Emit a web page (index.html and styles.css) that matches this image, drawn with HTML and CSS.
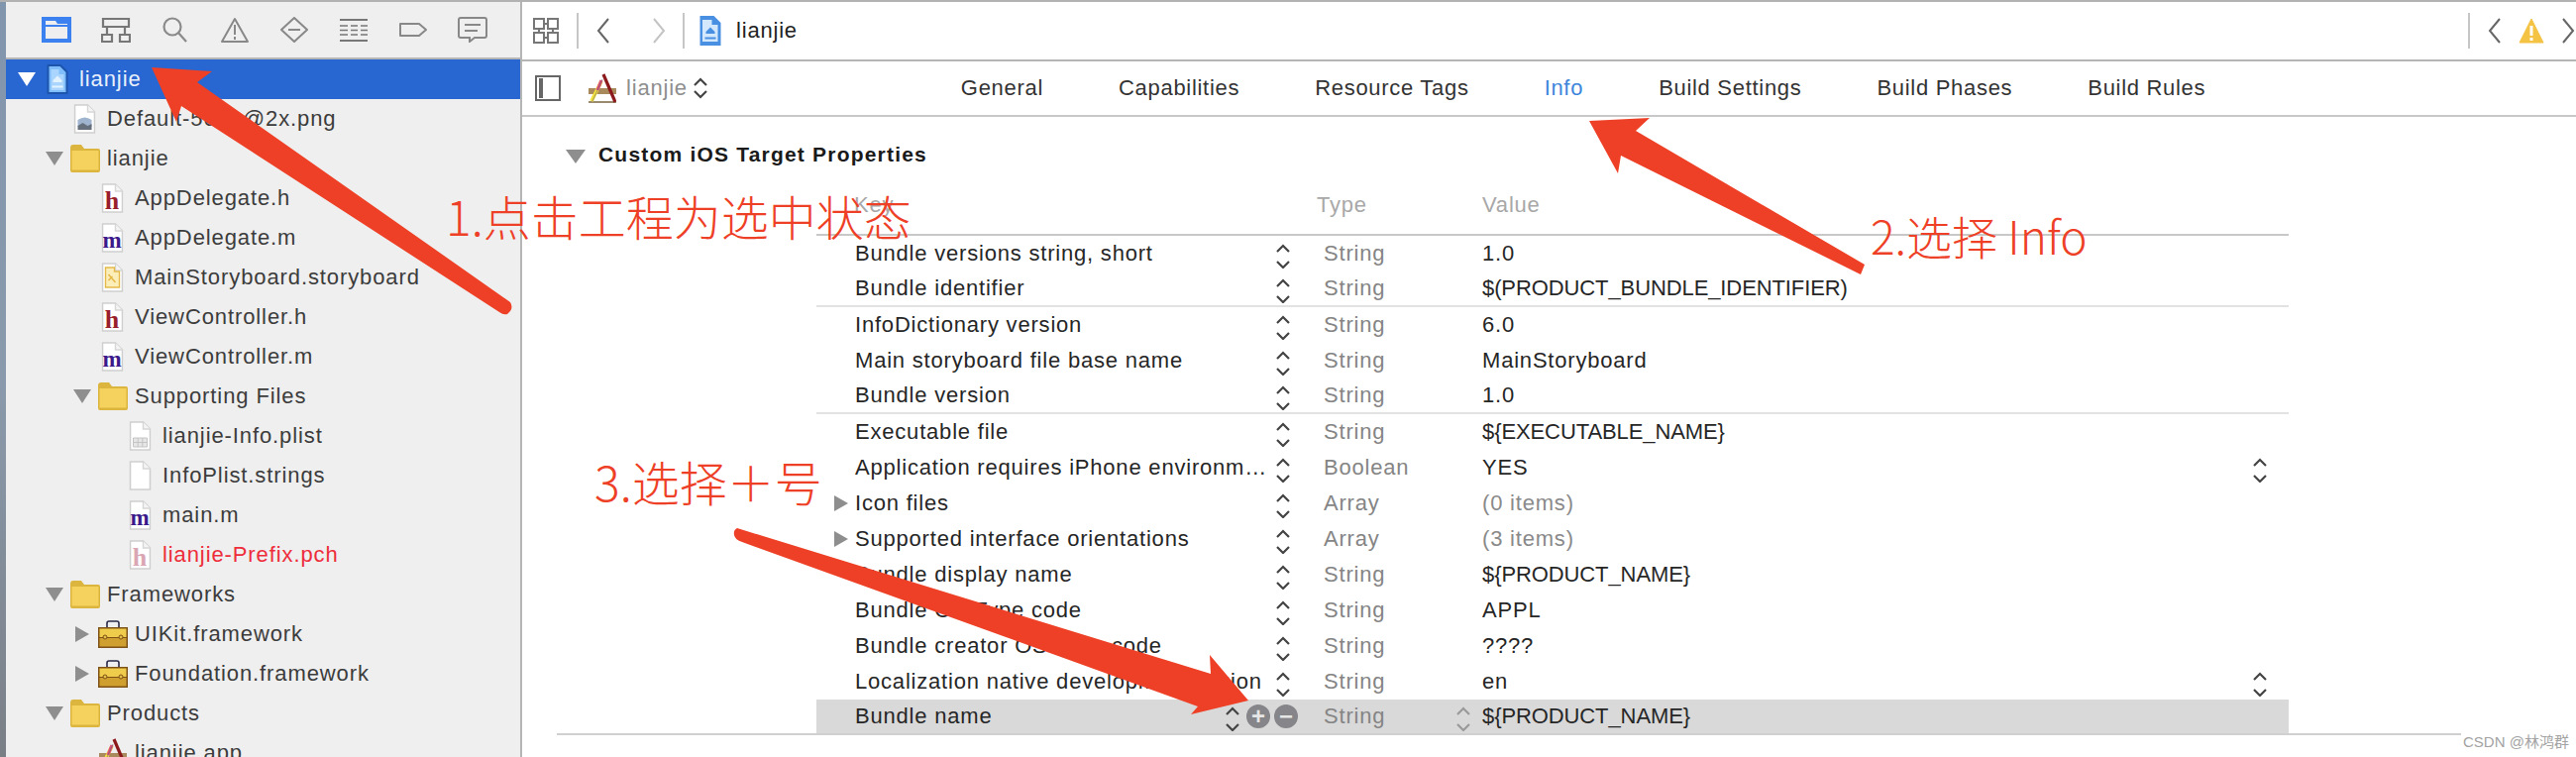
FILE: index.html
```html
<!DOCTYPE html>
<html lang="zh">
<head>
<meta charset="utf-8">
<title>lianjie</title>
<link rel="stylesheet" href="styles.css">
</head>
<body>
<svg class="defs" width="0" height="0" aria-hidden="true">
  <defs>
    <symbol id="file" viewBox="0 0 22 30"><path d="M1 1H14L21 8V29H1Z" fill="#fff" stroke="#cfcfcf" stroke-width="1.6"/><path d="M14 1V8H21" fill="#f4f4f4" stroke="#d6d6d6" stroke-width="1.4"/></symbol>
    <symbol id="file-h" viewBox="0 0 22 30"><use href="#file"/><text x="11" y="26" text-anchor="middle" class="glyph-h">h</text></symbol>
    <symbol id="file-h-faded" viewBox="0 0 22 30"><use href="#file"/><text x="11" y="26" text-anchor="middle" class="glyph-h-faded">h</text></symbol>
    <symbol id="file-m" viewBox="0 0 22 30"><use href="#file"/><text x="11" y="25" text-anchor="middle" class="glyph-m">m</text></symbol>
    <symbol id="file-png" viewBox="0 0 22 30"><use href="#file"/><path d="M4 16Q11 11 18 16V23H4Z" fill="#9fb4cf"/><path d="M4 22L9 19L14 22L18 20V26H4Z" fill="#66707c"/></symbol>
    <symbol id="file-board" viewBox="0 0 22 30"><use href="#file"/><path d="M4 5H13V9H18V25H4Z" fill="#fbeeb9" stroke="#e5b94a" stroke-width="1.4"/><path d="M7 12L14 20M7 18L11 14" stroke="#e5b94a" stroke-width="1.6"/></symbol>
    <symbol id="file-plist" viewBox="0 0 22 30"><use href="#file"/><path d="M4 17H18V26H4ZM4 21.500H18M8.700 17V26M13.300 17V26" fill="#e6e6e6" stroke="#c4c4c4" stroke-width="1"/></symbol>
    <symbol id="proj-sel" viewBox="0 0 23 32"><path d="M1 1H15L22 8V31H1Z" fill="#1d55ac"/><path d="M3 3H14L20 9V29H3Z" fill="#7fbdfb"/><path d="M5 6H13V11H18V27H5Z" fill="#a9d5ff"/><path d="M7 17L11.500 12.500L16 17V19H7Z" fill="#e3f2ff"/><path d="M6 23.500H17" stroke="#e3f2ff" stroke-width="2"/></symbol>
    <symbol id="proj" viewBox="0 0 23 32"><path d="M1 1H15L22 8V31H1Z" fill="#4a90e2"/><path d="M3.500 5H13V10H19V27H3.500Z" fill="#d4e8fd"/><path d="M7 17L11.500 12.500L16 17V19H7Z" fill="#4a90e2"/><path d="M6 23.500H17" stroke="#4a90e2" stroke-width="2"/></symbol>
    <symbol id="folder" viewBox="0 0 30 28"><path d="M0 3Q0 0 3 0H11L14 4H28Q30 4 30 6V26Q30 28 28 28H2Q0 28 0 26Z" fill="#dcb53e"/><path d="M1.500 6H28.500V25.500H1.500Z" fill="#f5d25e"/></symbol>
    <symbol id="toolbox" viewBox="0 0 30 28"><path d="M9 8V3Q9 1 11 1H19Q21 1 21 3V8" fill="none" stroke="#2a2a4a" stroke-width="1.600"/><path d="M0 7H30V28H0Z" fill="#7e5216"/><path d="M1.500 8.500H28.500V17H1.500Z" fill="#f0cc4c"/><path d="M1.500 18H28.500V26.500H1.500Z" fill="#cf9f30"/><circle cx="7" cy="17" r="2" fill="#e3c04a" stroke="#7e5216"/><circle cx="23" cy="17" r="2" fill="#e3c04a" stroke="#7e5216"/></symbol>
    <symbol id="appicon" viewBox="0 0 28 30"><path d="M0 15H28V21H0Z" fill="#a98a5c"/><path d="M0 29H28" stroke="#9a8a70" stroke-width="2"/><path d="M15 1L27 29" stroke="#8c1a1c" stroke-width="3.200"/><path d="M13 8L3 28" stroke="#f4e23c" stroke-width="3.600"/><path d="M9 17L13 7" stroke="#e0507a" stroke-width="3.200"/><path d="M4 28L14 6" stroke="#666" stroke-width=".6"/></symbol>
    <symbol id="updown" viewBox="0 0 16 30"><path d="M2 13L8 7L14 13M2 23L8 29L14 23" fill="none" stroke="currentColor" stroke-width="2.200"/></symbol>
    <symbol id="updown-sm" viewBox="0 0 16 24"><path d="M2 9L8 3L14 9M2 15L8 21L14 15" fill="none" stroke="currentColor" stroke-width="2.200"/></symbol>
  </defs>
</svg>

<div class="app">
  <div class="edge"></div>

  <aside class="sidebar">
    <nav class="nav-tools">
      <svg class="tool" viewBox="0 0 30 26"><path d="M0 0H30V26H0Z" fill="#3b82f0"/><path d="M4 4H14L16 7H26V22H4Z" fill="#efefef"/><path d="M4 8H26V10H4Z" fill="#3b82f0"/></svg>
      <svg class="tool" viewBox="0 0 30 26"><g fill="none" stroke="#777" stroke-width="2.200"><path d="M2 2H28V10H2ZM1 18H11V25H1ZM19 18H29V25H19ZM6 10V18M24 10V18"/></g></svg>
      <svg class="tool" viewBox="0 0 30 26"><g fill="none" stroke="#8a8a8a" stroke-width="2.200"><circle cx="12" cy="10" r="8.500"/><path d="M18 16L26 25"/></g></svg>
      <svg class="tool" viewBox="0 0 30 26"><g fill="none" stroke="#888" stroke-width="2"><path d="M15 2L28 25H2Z" stroke-linejoin="round"/><path d="M15 8V18M15 20V23"/></g></svg>
      <svg class="tool" viewBox="0 0 30 26"><g fill="none" stroke="#888" stroke-width="2"><path d="M15 1L28 13L15 25L2 13Z" stroke-linejoin="round"/><path d="M9 13H21"/></g></svg>
      <svg class="tool" viewBox="0 0 30 26"><g fill="none" stroke="#777" stroke-width="2"><path d="M1 3H29M1 24H29"/><path d="M1 9H9M12 9H19M22 9H29M1 13.500H9M12 13.500H19M22 13.500H29M1 18H9M12 18H19M22 18H29" stroke-width="1.600"/></g></svg>
      <svg class="tool" viewBox="0 0 30 26"><path d="M2 7H21L28 13L21 19H2Z" fill="none" stroke="#888" stroke-width="2" stroke-linejoin="round"/></svg>
      <svg class="tool" viewBox="0 0 30 26"><g fill="none" stroke="#888" stroke-width="2"><path d="M3 1H27Q29 1 29 3V19Q29 21 27 21H17L12 25V21H3Q1 21 1 19V3Q1 1 3 1Z"/><path d="M7 8H23M7 14H20" stroke-width="1.800"/></g></svg>
    </nav>

    <ul class="tree">
      <li class="node lv0 selected"><span class="slot"><i class="tri-down white"></i></span><span class="ico"><svg class="i-proj"><use href="#proj-sel"/></svg></span><span>lianjie</span></li>
      <li class="node lv1"><span class="slot"></span><span class="ico"><svg class="i-file"><use href="#file-png"/></svg></span><span>Default-568h@2x.png</span></li>
      <li class="node lv1"><span class="slot"><i class="tri-down"></i></span><span class="ico"><svg class="i-folder"><use href="#folder"/></svg></span><span>lianjie</span></li>
      <li class="node lv2"><span class="slot"></span><span class="ico"><svg class="i-file"><use href="#file-h"/></svg></span><span>AppDelegate.h</span></li>
      <li class="node lv2"><span class="slot"></span><span class="ico"><svg class="i-file"><use href="#file-m"/></svg></span><span>AppDelegate.m</span></li>
      <li class="node lv2"><span class="slot"></span><span class="ico"><svg class="i-file"><use href="#file-board"/></svg></span><span>MainStoryboard.storyboard</span></li>
      <li class="node lv2"><span class="slot"></span><span class="ico"><svg class="i-file"><use href="#file-h"/></svg></span><span>ViewController.h</span></li>
      <li class="node lv2"><span class="slot"></span><span class="ico"><svg class="i-file"><use href="#file-m"/></svg></span><span>ViewController.m</span></li>
      <li class="node lv2"><span class="slot"><i class="tri-down"></i></span><span class="ico"><svg class="i-folder"><use href="#folder"/></svg></span><span>Supporting Files</span></li>
      <li class="node lv3"><span class="slot"></span><span class="ico"><svg class="i-file"><use href="#file-plist"/></svg></span><span>lianjie-Info.plist</span></li>
      <li class="node lv3"><span class="slot"></span><span class="ico"><svg class="i-file"><use href="#file"/></svg></span><span>InfoPlist.strings</span></li>
      <li class="node lv3"><span class="slot"></span><span class="ico"><svg class="i-file"><use href="#file-m"/></svg></span><span>main.m</span></li>
      <li class="node lv3 missing"><span class="slot"></span><span class="ico"><svg class="i-file"><use href="#file-h-faded"/></svg></span><span>lianjie-Prefix.pch</span></li>
      <li class="node lv1"><span class="slot"><i class="tri-down"></i></span><span class="ico"><svg class="i-folder"><use href="#folder"/></svg></span><span>Frameworks</span></li>
      <li class="node lv2"><span class="slot"><i class="tri-right"></i></span><span class="ico"><svg class="i-folder"><use href="#toolbox"/></svg></span><span>UIKit.framework</span></li>
      <li class="node lv2"><span class="slot"><i class="tri-right"></i></span><span class="ico"><svg class="i-folder"><use href="#toolbox"/></svg></span><span>Foundation.framework</span></li>
      <li class="node lv1"><span class="slot"><i class="tri-down"></i></span><span class="ico"><svg class="i-folder"><use href="#folder"/></svg></span><span>Products</span></li>
      <li class="node lv2"><span class="slot"></span><span class="ico"><svg class="i-app"><use href="#appicon"/></svg></span><span>lianjie.app</span></li>
    </ul>
  </aside>

  <main class="main">
    <header class="jumpbar">
      <svg class="jb-grid" viewBox="0 0 26 26"><g fill="none" stroke="#777" stroke-width="2"><path d="M1 1H11V11H1ZM15 1H25V11H15ZM1 15H11V25H1ZM15 15H25V25H15ZM11 6H15M20 11V15M6 11V15M11 20H15"/></g></svg>
      <span class="divider first"></span>
      <svg class="jb-chev back" viewBox="0 0 14 26"><path d="M12 1L2 13L12 25" fill="none" stroke="#666" stroke-width="2"/></svg>
      <svg class="jb-chev forward" viewBox="0 0 14 26"><path d="M2 1L12 13L2 25" fill="none" stroke="#c4c4c4" stroke-width="2"/></svg>
      <span class="divider second"></span>
      <svg class="i-proj"><use href="#proj"/></svg>
      <span class="jb-title">lianjie</span>
      <span class="jb-right">
        <span class="divider"></span>
        <svg class="jb-chev r-back" viewBox="0 0 14 26"><path d="M12 1L2 13L12 25" fill="none" stroke="#666" stroke-width="2"/></svg>
        <svg class="jb-warn" viewBox="0 0 26 26"><path d="M13 1L25 25H1Z" fill="#f5c344" stroke="#f5c344" stroke-linejoin="round"/><path d="M13 8V18M13 20V23" stroke="#fff" stroke-width="3"/></svg>
        <svg class="jb-chev r-forward" viewBox="0 0 14 26"><path d="M2 1L12 13L2 25" fill="none" stroke="#666" stroke-width="2"/></svg>
      </span>
    </header>

    <div class="subbar">
      <svg class="panel" viewBox="0 0 26 26"><path d="M1 1H25V25H1Z" fill="#fff" stroke="#666" stroke-width="2"/><path d="M4 3H8V23H4Z" fill="#666"/></svg>
      <svg class="i-app"><use href="#appicon"/></svg>
      <span class="target">lianjie</span>
      <svg class="updown small"><use href="#updown-sm"/></svg>
      <nav class="tabs">
        <span>General</span>
        <span>Capabilities</span>
        <span>Resource Tags</span>
        <span class="active">Info</span>
        <span>Build Settings</span>
        <span>Build Phases</span>
        <span>Build Rules</span>
      </nav>
    </div>

    <section class="content">
      <h2 class="section-title"><i class="tri-down large"></i>Custom iOS Target Properties</h2>
      <div class="props">
        <div class="row head"><span class="key">Key</span><span class="chev"></span><span class="type">Type</span><span class="value">Value</span></div>
        <div class="row"><span class="key">Bundle versions string, short</span><span class="chev"><svg class="updown"><use href="#updown"/></svg></span><span class="type">String</span><span class="value">1.0</span></div>
        <div class="row end"><span class="key">Bundle identifier</span><span class="chev"><svg class="updown"><use href="#updown"/></svg></span><span class="type">String</span><span class="value caps">$(PRODUCT_BUNDLE_IDENTIFIER)</span></div>
        <div class="row"><span class="key">InfoDictionary version</span><span class="chev"><svg class="updown"><use href="#updown"/></svg></span><span class="type">String</span><span class="value">6.0</span></div>
        <div class="row"><span class="key">Main storyboard file base name</span><span class="chev"><svg class="updown"><use href="#updown"/></svg></span><span class="type">String</span><span class="value">MainStoryboard</span></div>
        <div class="row end"><span class="key">Bundle version</span><span class="chev"><svg class="updown"><use href="#updown"/></svg></span><span class="type">String</span><span class="value">1.0</span></div>
        <div class="row"><span class="key">Executable file</span><span class="chev"><svg class="updown"><use href="#updown"/></svg></span><span class="type">String</span><span class="value caps">${EXECUTABLE_NAME}</span></div>
        <div class="row"><span class="key">Application requires iPhone environm…</span><span class="chev"><svg class="updown"><use href="#updown"/></svg></span><span class="type">Boolean</span><span class="value">YES<svg class="updown right"><use href="#updown"/></svg></span></div>
        <div class="row"><span class="key expand"><i class="tri-right"></i>Icon files</span><span class="chev"><svg class="updown"><use href="#updown"/></svg></span><span class="type">Array</span><span class="value muted">(0 items)</span></div>
        <div class="row"><span class="key expand"><i class="tri-right"></i>Supported interface orientations</span><span class="chev"><svg class="updown"><use href="#updown"/></svg></span><span class="type">Array</span><span class="value muted">(3 items)</span></div>
        <div class="row"><span class="key">Bundle display name</span><span class="chev"><svg class="updown"><use href="#updown"/></svg></span><span class="type">String</span><span class="value caps">${PRODUCT_NAME}</span></div>
        <div class="row"><span class="key">Bundle OS Type code</span><span class="chev"><svg class="updown"><use href="#updown"/></svg></span><span class="type">String</span><span class="value">APPL</span></div>
        <div class="row"><span class="key">Bundle creator OS Type code</span><span class="chev"><svg class="updown"><use href="#updown"/></svg></span><span class="type">String</span><span class="value">????</span></div>
        <div class="row"><span class="key">Localization native development region</span><span class="chev"><svg class="updown"><use href="#updown"/></svg></span><span class="type">String</span><span class="value">en<svg class="updown right"><use href="#updown"/></svg></span></div>
        <div class="row picked">
          <span class="key">Bundle name<span class="row-tools"><svg class="updown"><use href="#updown"/></svg><span class="round">+</span></span></span>
          <span class="chev"><span class="round">&#8722;</span></span>
          <span class="type">String<svg class="updown light"><use href="#updown"/></svg></span>
          <span class="value caps">${PRODUCT_NAME}</span>
        </div>
      </div>
    </section>
  </main>
</div>

<svg class="arrows" viewBox="0 0 2600 764" aria-hidden="true">
  <path d="M153 68L214 72L199 83L515 305Q518 310 515 314L512 317Q508 318 504 315L183 107L178 123Z"/>
  <path d="M1604 122L1665 119L1651 132L1882 267L1878 277L1636 157L1633 175Z"/>
  <path d="M744 533Q740 535 741 540Q742 545 749 547L1209 713L1202 721L1260 707L1221 661L1222 680Z"/>
</svg>
<div class="note n1">1.点击工程为选中状态</div>
<div class="note n2">2.选择 Info</div>
<div class="note n3">3.选择＋号</div>
<div class="mark">CSDN @林鸿群</div>
</body>
</html>
```
FILE: styles.css
```css
* { box-sizing: border-box; }
html, body { margin: 0; padding: 0; }
body {
  position: relative;
  width: 2600px;
  height: 764px;
  overflow: hidden;
  background: #fff;
  border-top: 2px solid #b2b2b2;
  font-family: "Liberation Sans", "Noto Sans CJK SC", sans-serif;
  font-size: 22px;
  color: #3c3c3c;
}
.defs { position: absolute; }
.app { display: flex; height: 762px; }
.edge { width: 6px; flex: none; background: linear-gradient(#8195ad, #8a9aac 50%, #7a7f86); }

/* Sidebar */
.sidebar { width: 521px; flex: none; background: #efefef; border-right: 2px solid #b5b5b5; overflow: hidden; }
.nav-tools { height: 58px; display: flex; align-items: center; gap: 30px; padding-left: 36px; border-bottom: 2px solid #b5b5b5; }
.tool { width: 30px; height: 26px; flex: none; }
.tree { list-style: none; margin: 0; padding: 0; }
.node { height: 40px; display: flex; align-items: center; letter-spacing: .9px; white-space: nowrap; }
.lv0 { padding-left: 7px; }
.lv1 { padding-left: 35px; }
.lv2 { padding-left: 63px; }
.lv3 { padding-left: 91px; }
.slot { width: 28px; flex: none; display: flex; justify-content: center; }
.ico { width: 39px; flex: none; padding-right: 6px; display: flex; justify-content: center; align-items: center; }
.selected { background: #2866d1; color: #e8f0fb; }
.missing { color: #ee2d3a; }
.i-file { width: 23px; height: 30px; flex: none; }
.i-proj { width: 24px; height: 32px; flex: none; }
.i-folder { width: 32px; height: 28px; flex: none; }
.i-app { width: 28px; height: 30px; flex: none; }
.glyph-h { font: bold 26px "Liberation Serif", serif; fill: #9a1f2d; }
.glyph-h-faded { font: bold 26px "Liberation Serif", serif; fill: #dba6b4; }
.glyph-m { font: bold 23px "Liberation Serif", serif; fill: #3c1a8a; }

/* Triangles */
.tri-down { display: block; width: 0; height: 0; border-left: 9px solid transparent; border-right: 9px solid transparent; border-top: 14px solid #8e8e8e; }
.tri-down.white { border-top-color: #fff; }
.tri-down.large { border-left-width: 10px; border-right-width: 10px; border-top-width: 14px; }
.tri-right { display: block; width: 0; height: 0; border-top: 8px solid transparent; border-bottom: 8px solid transparent; border-left: 14px solid #8e8e8e; }

/* Main */
.main { flex: 1; min-width: 0; }
.jumpbar { height: 58px; display: flex; align-items: center; padding-left: 11px; color: #222; }
.jb-grid { width: 26px; height: 26px; flex: none; }
.divider { width: 2px; height: 36px; background: #c6c6c6; flex: none; display: block; }
.divider.first { margin-left: 18px; }
.divider.second { margin-left: 17px; margin-right: 14px; }
.jb-chev { width: 14px; height: 26px; flex: none; }
.jb-chev.back { margin-left: 18px; }
.jb-chev.forward { margin-left: 42px; }
.jb-title { margin-left: 14px; letter-spacing: .8px; }
.jb-right { margin-left: auto; display: flex; align-items: center; width: 109px; }
.r-back { margin-left: 18px; }
.jb-warn { width: 26px; height: 26px; margin-left: 17px; flex: none; }
.r-forward { margin-left: 17px; }

.subbar { height: 58px; display: flex; align-items: center; padding-left: 13px; border-top: 2px solid #b5b5b5; border-bottom: 2px solid #c8c8c8; }
.panel { width: 26px; height: 26px; flex: none; margin-right: 28px; }
.target { margin-left: 10px; color: #8e8e8e; letter-spacing: .8px; }
.updown { width: 16px; height: 30px; flex: none; color: #444; display: block; }
.updown.small { height: 24px; margin-left: 5px; }
.tabs { margin-left: 255px; display: flex; gap: 76px; color: #333; letter-spacing: .7px; white-space: nowrap; }
.tabs .active { color: #3d86dc; }

.section-title { margin: 0 0 0 44px; height: 70px; padding-top: 22px; display: flex; align-items: flex-start; gap: 13px; font-size: 21px; line-height: 32px; color: #1a1a1a; letter-spacing: 1.2px; }
.section-title .tri-down { margin-top: 11px; }

.props { margin-left: 35px; margin-right: 116px; padding-left: 262px; border-bottom: 2px solid #d0d0d0; height: 554px; }
.row { width: 1486px; height: 36px; display: grid; grid-template-columns: 460px 22px 190px 1fr; align-items: center; white-space: nowrap; color: #262626; letter-spacing: .8px; padding-bottom: 1px; }
.row.end { border-bottom: 2px solid #e2e2e2; }
.row.head { height: 50px; padding-bottom: 10px; border-bottom: 2px solid #c8c8c8; color: #a8a8a8; }
.key { padding-left: 39px; display: flex; align-items: center; }
.key.expand { padding-left: 18px; }
.key.expand .tri-right { margin-right: 7px; }
.chev { display: flex; justify-content: center; overflow: visible; }
.type { padding-left: 30px; padding-right: 3px; color: #858585; display: flex; align-items: center; }
.value { display: flex; align-items: center; padding-right: 21px; }
.value .right { margin-left: auto; }
.value.caps { letter-spacing: -.1px; }
.muted { color: #8a8a8a; }
.row.head .type { color: #a8a8a8; padding-left: 23px; }
.row.head .value { color: #a8a8a8; }
.row.head .key { padding-left: 38px; }

.row.picked { height: 34px; background: #d9d9d9; padding-bottom: 0; }
.row-tools { margin-left: auto; padding-right: 2px; display: flex; align-items: center; gap: 6px; }
.round { width: 24px; height: 24px; flex: none; border-radius: 50%; background: #85858a; color: #e6e6e6; font-size: 24px; font-weight: bold; line-height: 23px; text-align: center; letter-spacing: 0; display: block; }
.picked .chev { justify-content: flex-start; padding-left: 2px; }
.updown.light { margin-left: auto; margin-right: 8px; color: #9a9a9a; }

/* Annotations over the screenshot */
.arrows { position: absolute; left: 0; top: -2px; width: 2600px; height: 764px; fill: #ee4026; pointer-events: none; }
.note { position: absolute; font-family: "Noto Sans CJK SC", "Liberation Sans", sans-serif; font-weight: 300; font-size: 48px; line-height: 60px; color: #ee4026; white-space: nowrap; }
.n1 { left: 450px; top: 185px; }
.n2 { left: 1888px; top: 205px; font-size: 46px; }
.n3 { left: 600px; top: 453px; }
.mark { position: absolute; left: 2485px; top: 737px; padding-left: 1px; background: #fff; color: #a3a3a3; font-size: 15px; line-height: 20px; white-space: nowrap; }
```
